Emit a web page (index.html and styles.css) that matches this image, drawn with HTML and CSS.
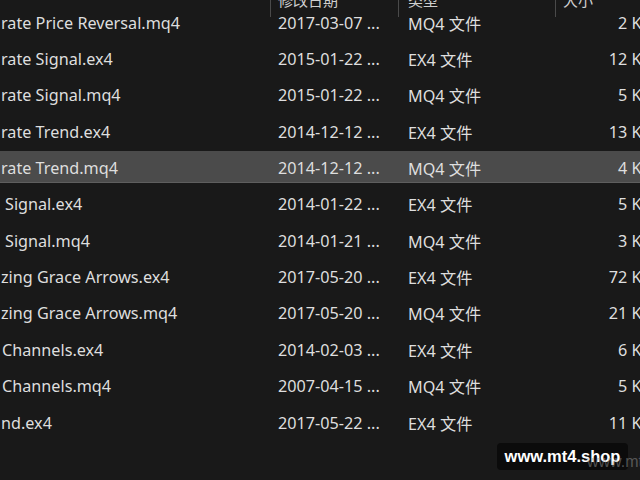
FILE: index.html
```html
<!DOCTYPE html>
<html lang="zh">
<head>
<meta charset="utf-8">
<title>Files</title>
<link rel="stylesheet" href="styles.css">
</head>
<body>
<div class="view">
  <div class="list">
    <div class="header">
      <div class="col name"></div>
      <div class="col date sep">修改日期</div>
      <div class="col type sep">类型</div>
      <div class="col size sep">大小</div>
    </div>
    <div class="row"><div class="col name">rate Price Reversal.mq4</div><div class="col date">2017-03-07 ...</div><div class="col type">MQ4 文件</div><div class="col size">2 KB</div></div>
    <div class="row"><div class="col name">rate Signal.ex4</div><div class="col date">2015-01-22 ...</div><div class="col type">EX4 文件</div><div class="col size">12 KB</div></div>
    <div class="row"><div class="col name">rate Signal.mq4</div><div class="col date">2015-01-22 ...</div><div class="col type">MQ4 文件</div><div class="col size">5 KB</div></div>
    <div class="row"><div class="col name">rate Trend.ex4</div><div class="col date">2014-12-12 ...</div><div class="col type">EX4 文件</div><div class="col size">13 KB</div></div>
    <div class="row selected"><div class="col name">rate Trend.mq4</div><div class="col date">2014-12-12 ...</div><div class="col type">MQ4 文件</div><div class="col size">4 KB</div></div>
    <div class="row"><div class="col name indent">Signal.ex4</div><div class="col date">2014-01-22 ...</div><div class="col type">EX4 文件</div><div class="col size">5 KB</div></div>
    <div class="row"><div class="col name indent">Signal.mq4</div><div class="col date">2014-01-21 ...</div><div class="col type">MQ4 文件</div><div class="col size">3 KB</div></div>
    <div class="row"><div class="col name">zing Grace Arrows.ex4</div><div class="col date">2017-05-20 ...</div><div class="col type">EX4 文件</div><div class="col size">72 KB</div></div>
    <div class="row"><div class="col name">zing Grace Arrows.mq4</div><div class="col date">2017-05-20 ...</div><div class="col type">MQ4 文件</div><div class="col size">21 KB</div></div>
    <div class="row"><div class="col name indent-s">Channels.ex4</div><div class="col date">2014-02-03 ...</div><div class="col type">EX4 文件</div><div class="col size">6 KB</div></div>
    <div class="row"><div class="col name indent-s">Channels.mq4</div><div class="col date">2007-04-15 ...</div><div class="col type">MQ4 文件</div><div class="col size">5 KB</div></div>
    <div class="row"><div class="col name">nd.ex4</div><div class="col date">2017-05-22 ...</div><div class="col type">EX4 文件</div><div class="col size">11 KB</div></div>
  </div>
  <div class="wm">www.mt4.shop</div>
  <div class="wm-ghost">www.mt4.shop</div>
</div>
</body>
</html>
```
FILE: styles.css
```css
html, body {
  margin: 0;
  padding: 0;
  width: 640px;
  height: 480px;
  overflow: hidden;
  background: #191919;
}
.view {
  position: relative;
  width: 640px;
  height: 480px;
  overflow: hidden;
  font-family: "Noto Sans", "Noto Sans CJK SC", sans-serif;
  font-size: 16.2px;
  color: #dedede;
}
.list {
  width: 660px;
  margin-top: -20px;
  display: flex;
  flex-direction: column;
  gap: 4.36px;
}
.header {
  display: flex;
  height: 21.2px;
  box-sizing: border-box;
  align-items: flex-start;
  font-size: 15px;
  color: #cfcfcf;
  line-height: 20px;
}
.header .col {
  overflow: visible;
  position: relative;
  padding-top: 10px;
}
.row {
  display: flex;
  height: 32px;
  box-sizing: border-box;
  padding-top: 2px;
  align-items: center;
  white-space: nowrap;
}
.row.selected {
  background: #4b4b4b;
  box-shadow: inset 0 -1px 0 #5e5e5e;
}
.col { flex: none; white-space: nowrap; overflow: hidden; }
.name { width: 270px; padding-left: 1px; box-sizing: border-box; }
.name.indent { padding-left: 5px; }
.name.indent-s { padding-left: 2px; }
.date { width: 128px; padding-left: 8px; box-sizing: border-box; }
.type { width: 157px; padding-left: 10px; box-sizing: border-box; }
.size { width: 97px; text-align: right; box-sizing: border-box; }
.header .sep::before {
  content: "";
  position: absolute;
  left: 0;
  top: 0;
  width: 1px;
  height: 37px;
  background: #4a4a4a;
}
.header .size { text-align: left; padding-left: 8px; }
.wm {
  position: absolute;
  left: 497px;
  top: 443px;
  width: 131px;
  height: 27px;
  border-radius: 4px;
  background: #0b0b0b;
  color: #ffffff;
  font-family: "Liberation Sans", sans-serif;
  font-weight: bold;
  font-size: 16.5px;
  line-height: 27px;
  text-align: center;
}
.wm-ghost {
  position: absolute;
  left: 587px;
  top: 453px;
  font-family: "Liberation Sans", sans-serif;
  font-size: 16px;
  color: rgba(150, 150, 150, 0.5);
  white-space: nowrap;
}
```
